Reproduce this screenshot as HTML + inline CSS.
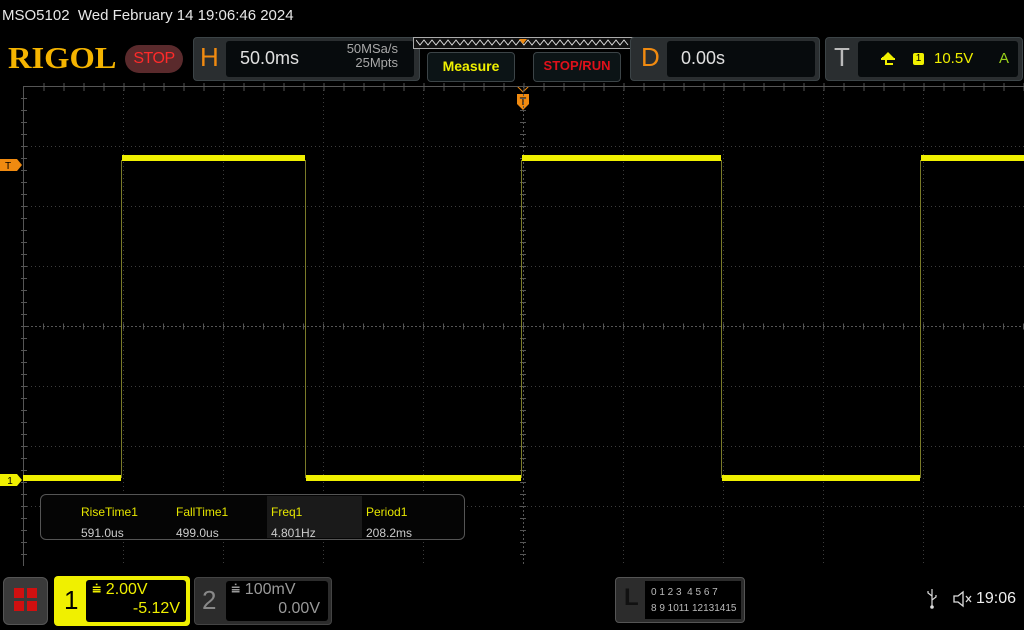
<!DOCTYPE html>
<html><head><meta charset="utf-8"><style>
*{margin:0;padding:0;box-sizing:border-box}
body{width:1024px;height:630px;background:#000;overflow:hidden;position:relative;font-family:"Liberation Sans","DejaVu Sans",sans-serif;color:#fff}
.a{position:absolute}
.box{position:absolute;background:#2a2e30;border:1px solid #3c4447;border-radius:4px}
.inner{position:absolute;background:#070b0d;border-radius:3px}
</style></head><body>
<div class="a" style="left:2px;top:7px;font-size:15px;color:#e8e8e8">MSO5102&nbsp; Wed February 14 19:06:46 2024</div>
<div class="a" style="left:8px;top:40px;font-family:'Liberation Serif',serif;font-weight:bold;font-size:31px;color:#f5b400;transform:scaleX(1.05);transform-origin:left">RIGOL</div>
<div class="a" style="left:125px;top:45px;width:58px;height:28px;border-radius:14px;background:#5a2a2c;color:#ff2a2a;font-size:16px;text-align:center;line-height:28px;letter-spacing:-0.5px">STOP</div>
<!-- H -->
<div class="box" style="left:193px;top:37px;width:227px;height:44px"></div>
<div class="a" style="left:200px;top:42px;font-size:26px;color:#f08a10">H</div>
<div class="inner" style="left:226px;top:41px;width:188px;height:36px"></div>
<div class="a" style="left:240px;top:48px;font-size:18px;color:#e0e0e0">50.0ms</div>
<div class="a" style="left:330px;top:42px;font-size:13px;color:#a8a8a8;text-align:right;width:68px;line-height:14px">50MSa/s<br>25Mpts</div>
<!-- timeline -->
<div class="a" style="left:413px;top:37px;width:222px;height:12px;border:1px solid #aaa;background:#111"></div>
<svg class="a" style="left:416px;top:38px" width="216" height="10"><polyline fill="none" stroke="#ddd" stroke-width="1" points="0,2 4,7 8,2 12,7 16,2 20,7 24,2 28,7 32,2 36,7 40,2 44,7 48,2 52,7 56,2 60,7 64,2 68,7 72,2 76,7 80,2 84,7 88,2 92,7 96,2 100,7 104,2 108,7 112,2 116,7 120,2 124,7 128,2 132,7 136,2 140,7 144,2 148,7 152,2 156,7 160,2 164,7 168,2 172,7 176,2 180,7 184,2 188,7 192,2 196,7 200,2 204,7 208,2 212,7"/><polygon points="103,1 111,1 107,6" fill="#f08a10"/></svg>
<div class="box" style="left:427px;top:52px;width:88px;height:30px;background:#0c1416"></div>
<div class="a" style="left:427px;top:58px;width:88px;text-align:center;font-size:14px;font-weight:bold;color:#f0f000">Measure</div>
<div class="box" style="left:533px;top:52px;width:88px;height:30px;background:#0c1416"></div>
<div class="a" style="left:533px;top:58px;width:88px;text-align:center;font-size:13px;font-weight:bold;color:#e0101a">STOP/RUN</div>
<!-- D -->
<div class="box" style="left:630px;top:37px;width:190px;height:44px"></div>
<div class="a" style="left:641px;top:42px;font-size:26px;color:#f08a10">D</div>
<div class="inner" style="left:667px;top:41px;width:148px;height:36px"></div>
<div class="a" style="left:681px;top:48px;font-size:18px;color:#e0e0e0">0.00s</div>
<!-- T -->
<div class="box" style="left:825px;top:37px;width:198px;height:44px"></div>
<div class="a" style="left:834px;top:42px;font-size:26px;color:#bbb">T</div>
<div class="inner" style="left:858px;top:41px;width:160px;height:36px"></div>
<svg class="a" style="left:880px;top:50px" width="16" height="18"><path d="M2,8 H6 V14 H13" fill="none" stroke="#f0f000" stroke-width="2"/><polygon points="2,8 8,2 14,8" fill="#f0f000"/><path d="M1,9 H15" stroke="#f0f000" stroke-width="2"/></svg>
<div class="a" style="left:913px;top:53px;width:11px;height:12px;background:#f0f000;color:#000;font-size:10px;text-align:center;line-height:12px;border-radius:2px">1</div>
<div class="a" style="left:934px;top:50px;font-size:15px;color:#f0f000">10.5V</div>
<div class="a" style="left:999px;top:50px;font-size:15px;color:#9ad21a">A</div>
<!-- trigger pos marker -->
<svg class="a" style="left:516px;top:86px" width="16" height="26"><polygon points="1,0 13,0 7,6" fill="none" stroke="#f08a10"/><polygon points="1,8 13,8 13,18 7,24 1,18" fill="#f08a10"/><text x="7" y="19" font-size="11" text-anchor="middle" fill="#000" font-family="Liberation Sans">T</text></svg>
<!-- grid -->
<svg class="a" style="left:0;top:0" width="1024" height="630">
<g stroke="#3c3c3c" stroke-width="1" stroke-dasharray="1,3">
<line x1="123.5" y1="86" x2="123.5" y2="566"/><line x1="223.5" y1="86" x2="223.5" y2="566"/><line x1="323.5" y1="86" x2="323.5" y2="566"/><line x1="423.5" y1="86" x2="423.5" y2="566"/><line x1="623.5" y1="86" x2="623.5" y2="566"/><line x1="723.5" y1="86" x2="723.5" y2="566"/><line x1="823.5" y1="86" x2="823.5" y2="566"/><line x1="923.5" y1="86" x2="923.5" y2="566"/>
<line x1="23" y1="146.5" x2="1024" y2="146.5"/><line x1="23" y1="206.5" x2="1024" y2="206.5"/><line x1="23" y1="266.5" x2="1024" y2="266.5"/><line x1="23" y1="386.5" x2="1024" y2="386.5"/><line x1="23" y1="446.5" x2="1024" y2="446.5"/><line x1="23" y1="506.5" x2="1024" y2="506.5"/>
</g>
<g stroke="#555" stroke-width="1" stroke-dasharray="2,2">
<line x1="523.5" y1="86" x2="523.5" y2="566"/><line x1="23" y1="326.5" x2="1024" y2="326.5"/>
</g>
<g stroke="#555" stroke-width="1">
<line x1="23.5" y1="86" x2="23.5" y2="566"/><line x1="23" y1="86.5" x2="1024" y2="86.5"/>
</g>
<g stroke="#555" stroke-width="1" stroke-dasharray="1,19" >
<line x1="43.5" y1="87" x2="1024" y2="87" stroke-width="8" stroke-dasharray="1,19"/>
<line x1="23" y1="98.5" x2="1024" y2="98.5" stroke-width="0"/>
</g>
<g stroke="#555" stroke-width="6" stroke-dasharray="1,11"><line x1="24" y1="98" x2="24" y2="566"/><line x1="523" y1="98" x2="523" y2="566"/></g>
<g stroke="#555" stroke-width="6" stroke-dasharray="1,19"><line x1="43" y1="326.5" x2="1024" y2="326.5"/></g>
<!-- waveform -->
<g stroke="#f0f000" fill="none">
<path d="M121.5,478 V160 M305.5,160 V478 M521.5,478 V160 M721.5,160 V478 M920.5,478 V160" stroke="#7a7a28" stroke-width="1"/>
<g stroke-width="6"><line x1="23" y1="478" x2="121" y2="478"/><line x1="122" y1="158" x2="305" y2="158"/><line x1="306" y1="478" x2="521" y2="478"/><line x1="522" y1="158" x2="721" y2="158"/><line x1="722" y1="478" x2="920" y2="478"/><line x1="921" y1="158" x2="1024" y2="158"/></g>
</g>
<polygon points="0,159 17,159 22,165 17,171 0,171" fill="#f08a10"/><text x="8" y="169" font-size="10" fill="#000" text-anchor="middle" font-family="Liberation Sans">T</text>
<polygon points="0,474 17,474 22,480 17,486 0,486" fill="#f0f000"/><text x="10" y="484" font-size="10" fill="#000" text-anchor="middle" font-family="Liberation Sans">1</text>
</svg>
<!-- measure panel -->
<div class="a" style="left:40px;top:494px;width:425px;height:46px;background:#050505;border:1px solid #555;border-radius:6px"></div>
<div class="a" style="left:267px;top:496px;width:95px;height:42px;background:#1a1a1a"></div>
<div class="a" style="left:81px;top:502px;font-size:12px;color:#e6e600;line-height:21px">RiseTime1<br><span style="color:#ccc">591.0us</span></div>
<div class="a" style="left:176px;top:502px;font-size:12px;color:#e6e600;line-height:21px">FallTime1<br><span style="color:#ccc">499.0us</span></div>
<div class="a" style="left:271px;top:502px;font-size:12px;color:#e6e600;line-height:21px">Freq1<br><span style="color:#ccc">4.801Hz</span></div>
<div class="a" style="left:366px;top:502px;font-size:12px;color:#e6e600;line-height:21px">Period1<br><span style="color:#ccc">208.2ms</span></div>
<!-- bottom -->
<div class="a" style="left:3px;top:577px;width:45px;height:48px;background:#3a3a3a;border:1px solid #555;border-radius:6px"></div>
<div class="a" style="left:14px;top:588px;width:10px;height:10px;background:#d01010"></div><div class="a" style="left:27px;top:588px;width:10px;height:10px;background:#d01010"></div><div class="a" style="left:14px;top:601px;width:10px;height:10px;background:#d01010"></div><div class="a" style="left:27px;top:601px;width:10px;height:10px;background:#d01010"></div>
<div class="a" style="left:54px;top:576px;width:136px;height:50px;background:#f0f000;border-radius:4px"></div>
<div class="a" style="left:64px;top:585px;font-size:26px;color:#000">1</div>
<div class="a" style="left:86px;top:580px;width:100px;height:42px;background:#000;border-radius:3px"></div>
<div class="a" style="left:92px;top:580px;font-size:16px;color:#f0f000;line-height:20px">⩧ 2.00V</div>
<div class="a" style="left:120px;top:600px;width:60px;text-align:right;font-size:16px;color:#f0f000">-5.12V</div>
<div class="a" style="left:194px;top:577px;width:138px;height:48px;background:#2c2c2c;border:1px solid #444;border-radius:4px"></div>
<div class="a" style="left:202px;top:585px;font-size:26px;color:#888">2</div>
<div class="a" style="left:226px;top:581px;width:102px;height:40px;background:#000;border-radius:3px"></div>
<div class="a" style="left:231px;top:580px;font-size:16px;color:#999;line-height:20px">⩧ 100mV</div>
<div class="a" style="left:260px;top:600px;width:60px;text-align:right;font-size:16px;color:#999">0.00V</div>
<div class="a" style="left:615px;top:577px;width:130px;height:46px;background:#2c2c2c;border:1px solid #555;border-radius:4px"></div>
<div class="a" style="left:624px;top:584px;font-size:24px;color:#111;font-weight:bold">L</div>
<div class="a" style="left:645px;top:581px;width:96px;height:38px;background:#000"></div>
<div class="a" style="left:651px;top:585px;font-size:10px;color:#bbb;line-height:16px">0 1 2 3 &nbsp;4 5 6 7<br>8 9 1011 12131415</div>
<svg class="a" style="left:926px;top:588px" width="12" height="22"><path d="M6,1 V20 M6,8 L2,5 V3 M6,12 L10,9 V7" stroke="#ddd" fill="none" stroke-width="1.2"/><circle cx="6" cy="19" r="1.8" fill="#ddd"/></svg>
<svg class="a" style="left:952px;top:590px" width="22" height="18"><path d="M2,6 H6 L11,2 V16 L6,12 H2 Z" fill="none" stroke="#ddd" stroke-width="1.3"/><path d="M14,6 L19,12 M19,6 L14,12" stroke="#ddd" stroke-width="1.3"/></svg>
<div class="a" style="left:976px;top:590px;font-size:16px;color:#eee">19:06</div>
</body></html>
